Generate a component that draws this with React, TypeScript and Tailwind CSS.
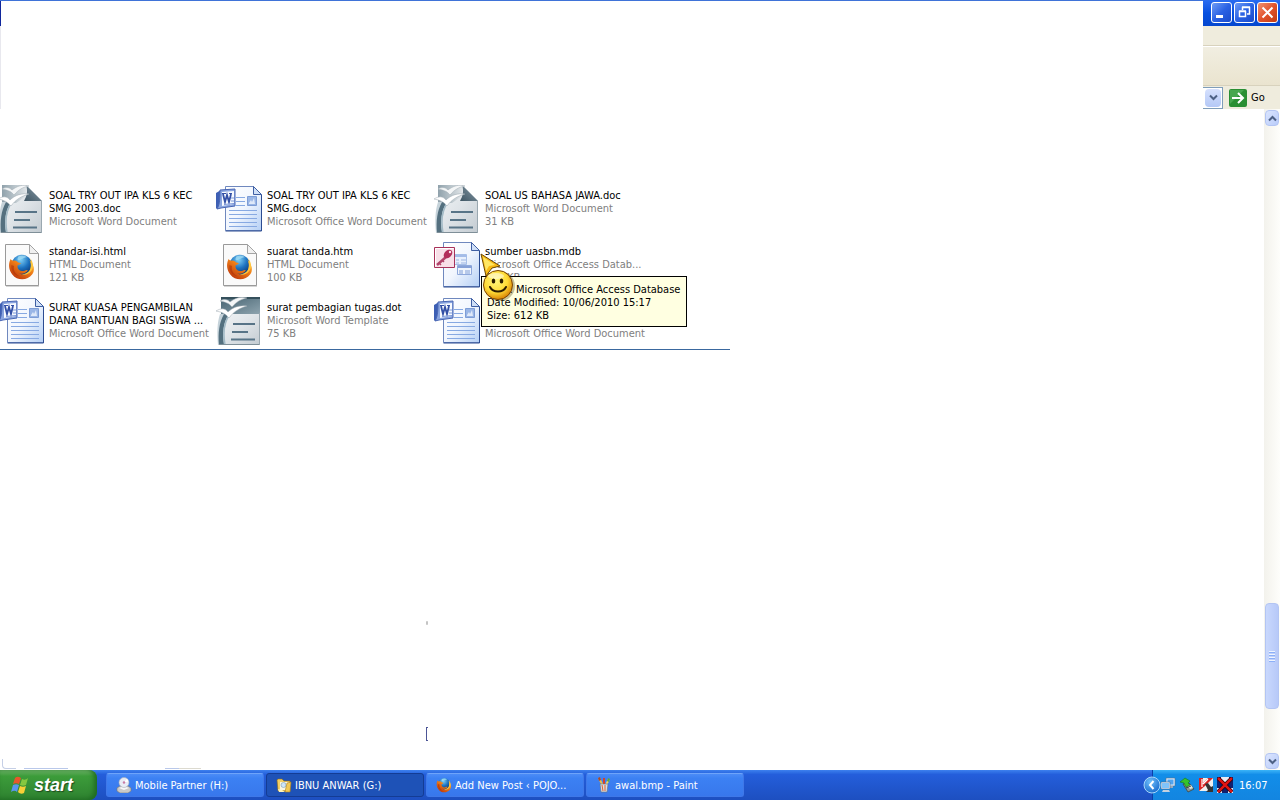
import { ReactNode } from "react";

type IconKind = "writer" | "writerTemplate" | "word" | "firefox" | "access";

interface FileEntry {
  id: string;
  icon: IconKind;
  name: string;
  lines: string[];
}

const FILES: FileEntry[] = [
  { id: "f1", icon: "writer", name: "SOAL TRY OUT IPA KLS 6 KEC SMG 2003.doc", lines: ["Microsoft Word Document"] },
  { id: "f2", icon: "word", name: "SOAL TRY OUT IPA KLS 6 KEC SMG.docx", lines: ["Microsoft Office Word Document"] },
  { id: "f3", icon: "writer", name: "SOAL US BAHASA JAWA.doc", lines: ["Microsoft Word Document", "31 KB"] },
  { id: "f4", icon: "firefox", name: "standar-isi.html", lines: ["HTML Document", "121 KB"] },
  { id: "f5", icon: "firefox", name: "suarat tanda.htm", lines: ["HTML Document", "100 KB"] },
  { id: "f6", icon: "access", name: "sumber uasbn.mdb", lines: ["Microsoft Office Access Datab...", "612 KB"] },
  { id: "f7", icon: "word", name: "SURAT KUASA PENGAMBILAN DANA BANTUAN BAGI SISWA ...", lines: ["Microsoft Office Word Document"] },
  { id: "f8", icon: "writerTemplate", name: "surat pembagian tugas.dot", lines: ["Microsoft Word Template", "75 KB"] },
  { id: "f9", icon: "word", name: "", lines: ["Microsoft Office Word Document"] },
];

function Gradients() {
  return (
    <svg className="absolute h-0 w-0" aria-hidden="true">
      <defs>
        <linearGradient id="paperBlue" x1="0" y1="0" x2="1" y2="1">
          <stop offset="0" stopColor="#ffffff" />
          <stop offset="0.5" stopColor="#f1f6fe" />
          <stop offset="1" stopColor="#b4cff5" />
        </linearGradient>
        <linearGradient id="paperGrey" x1="0" y1="0" x2="1" y2="1">
          <stop offset="0" stopColor="#f3f5f6" />
          <stop offset="0.5" stopColor="#dfe4e8" />
          <stop offset="1" stopColor="#c3cbd1" />
        </linearGradient>
        <linearGradient id="header" x1="0" y1="0" x2="1" y2="0">
          <stop offset="0" stopColor="#8fa1ab" />
          <stop offset="1" stopColor="#dfe4e7" />
        </linearGradient>
        <linearGradient id="slate" x1="0" y1="0" x2="1" y2="1">
          <stop offset="0" stopColor="#44616f" />
          <stop offset="1" stopColor="#8ea4af" />
        </linearGradient>
        <linearGradient id="fold" x1="0" y1="1" x2="1" y2="0">
          <stop offset="0" stopColor="#3e5563" />
          <stop offset="1" stopColor="#8c9fab" />
        </linearGradient>
        <radialGradient id="globe" cx="0.45" cy="0.25" r="0.8">
          <stop offset="0" stopColor="#7fd0f5" />
          <stop offset="0.5" stopColor="#1c72c0" />
          <stop offset="1" stopColor="#0a2b66" />
        </radialGradient>
        <linearGradient id="fox" x1="1" y1="0" x2="0.2" y2="1">
          <stop offset="0" stopColor="#ffd84a" />
          <stop offset="0.45" stopColor="#f07f18" />
          <stop offset="1" stopColor="#b9320a" />
        </linearGradient>
        <radialGradient id="face" cx="0.42" cy="0.35" r="0.68">
          <stop offset="0" stopColor="#fff67e" />
          <stop offset="0.6" stopColor="#ffda35" />
          <stop offset="1" stopColor="#d57c00" />
        </radialGradient>
        <radialGradient id="chevron" cx="0.4" cy="0.3" r="0.8">
          <stop offset="0" stopColor="#6fc0fb" />
          <stop offset="1" stopColor="#0f62c9" />
        </radialGradient>
      </defs>
    </svg>
  );
}

function FirefoxMark() {
  return (
    <>
      <circle cx="16" cy="14" r="12" fill="url(#globe)" />
      <path d="M12 4c4-2 8-1 10 1-3 0-4 2-7 2-1 2-4 2-4 0z" fill="#a8e0f5" opacity="0.7" />
      <path
        d="M3 7c1 1 2 2 3 2 2-1 4 0 6 2 2 0 3 1 3 1-1 2-4 2-4 3 0 4 3 6 6 6 3 0 4-2 6-1-2 4-8 5-11 3 4 3 9 3 12-1 4-4 3-9 1-14 5 5 7 12 3 17-5 7-17 8-23 0C1 20 0 13 3 7z"
        fill="url(#fox)"
      />
      <path d="M26 6c4 6 4 11 1 15-3 4-7 5-11 4 5-1 9-3 10-7 1-4 1-8 0-12z" fill="#ffc63c" />
      <path d="M4 14c-1 6 3 12 9 13-5-3-7-7-6-12z" fill="#a62a08" opacity="0.5" />
    </>
  );
}

function FileIcon({ kind }: { kind: IconKind }) {
  const svgProps = { viewBox: "0 0 48 48", className: "h-12 w-12 shrink-0", "aria-hidden": true };

  if (kind === "firefox") {
    return (
      <svg {...svgProps}>
        <path d="M8 4h24l9 9v33H8z" fill="#888" opacity="0.35" />
        <path d="M7.500 3.500h24l9 9v32h-33z" fill="#fafafa" stroke="#9a9a9a" />
        <path d="M31.500 3.500v9h9z" fill="#f0f0f0" stroke="#a4a4a4" />
        <g transform="translate(10 12) scale(0.86)">
          <FirefoxMark />
        </g>
      </svg>
    );
  }

  if (kind === "word" || kind === "access") {
    return (
      <svg {...svgProps}>
        <path d="M9.500 1.500h28l8 8v36h-36z" fill="url(#paperBlue)" stroke="#6f88be" />
        <path d="M45.500 10v36h-36" fill="none" stroke="#2c4c92" />
        <path d="M37.500 1.500v8h8z" fill="#cfdff7" stroke="#3f5fa3" />
        {kind === "word" ? (
          <>
            <path
              d="M20 12.500h9M20 16.500h9M20 20.500h9M13 25.500h28M13 29.500h28M13 33.500h28M13 37.500h28M13 41.500h28"
              stroke="#87a9e2"
            />
            <path d="M31.500 11.500h9v9h-9z" fill="#9ab6e6" stroke="#7d9dd6" />
            <path d="M33 18l2-3 1 2 2-4 1 6h-6z" fill="#dfe9f9" />
            <path d="M0 8l5-3v17l-4 2-1-1z" fill="#3d5fb4" />
            <path d="M4 5l15-1v17L5 23l-4 1c3-5 3-12 3-19z" fill="#8aa5df" stroke="#4866b4" />
            <path d="M6 7l12-1v13L6 21z" fill="#f7faff" />
            <path d="M7 9l2 8 2-7 2 7 2-8" fill="none" stroke="#3350a6" strokeWidth="1.800" />
            <path d="M6 8.500h4M13 8.500h3" stroke="#3350a6" />
            <path d="M15 13h3M15 16h3M8 19.500l10-1" stroke="#7b97d8" />
          </>
        ) : (
          <>
            <path d="M18.500 13.500h14v10h-14z" fill="#e8f0fd" stroke="#a7bfe8" />
            <path d="M19 14h14v2H19z" fill="#a4bce8" />
            <path d="M22 19h3M27 19h5M22 22h3M27 22h5" stroke="#9db5e2" />
            <path d="M23.500 24.500h14v9h-14z" fill="#f0f5fd" stroke="#8fa9dc" />
            <path d="M24 25h14v2H24z" fill="#86a1d8" />
            <path d="M25 30h4M31 30h5M25 32h4M31 32h5" stroke="#7f9dd6" />
            <path d="M.5 6.500h20v20H.5z" fill="#f8dfe8" stroke="#a8325a" />
            <path d="M1.500 25.500V7.500h18" fill="none" stroke="#fff" />
            <path d="M12 16l-9 8" stroke="#b1446b" strokeWidth="2.500" />
            <path d="M5 22l2 2M8 19l2 2" stroke="#b1446b" strokeWidth="1.500" />
            <ellipse cx="14" cy="13" rx="5" ry="3.500" transform="rotate(-45 14 13)" fill="#b32d5b" />
            <circle cx="16" cy="11" r="1.200" fill="#fbe4ec" />
          </>
        )}
      </svg>
    );
  }

  return (
    <svg {...svgProps}>
      {kind === "writerTemplate" ? (
        <>
          <path d="M5 16h39v32H3z" fill="url(#paperGrey)" />
          <path d="M5 0h39v17H5z" fill="url(#slate)" />
          <path d="M5 0h39v2H5z" fill="#35505c" />
        </>
      ) : (
        <>
          <path d="M4 0h24l16 16v32H4z" fill="url(#paperGrey)" />
          <path d="M4 0h24v11l-10 7H4z" fill="url(#header)" />
          <path d="M28 0l16 16H26c3-5 4-10 2-16z" fill="url(#fold)" />
        </>
      )}
      <path d="M4 17h9C8 25 7 37 9 48H2c-1-12-1-22 2-31z" fill="#c6d3da" />
      <path d="M8 17h5C7 25 6 37 8 48H3c-1-12 0-22 5-31z" fill="#54707f" />
      <path d="M14 17c-6 8-7 20-5 31" fill="none" stroke="#a2bac6" strokeWidth="1.500" />
      <path d="M3 47.500h41" stroke="#7f8f98" />
      <path d="M43.500 16v32" stroke="#9aa8b0" />
      <path
        d="M4 4c4-2 7-2 10 1 5-4 11-6 17-4-6 1-11 4-15 9-3-4-7-5-12-6z"
        fill="#f4f6f7"
        stroke="#9aa7af"
        strokeWidth="0.500"
      />
      <path
        d="M0 14c5-3 9-3 12 1 5-5 12-7 19-6-7 2-13 5-18 12-3-4-7-6-13-7z"
        fill="#ffffff"
        stroke="#9aa7af"
        strokeWidth="0.500"
      />
      <path d="M17 27h22M16 35h16M15 42.500h24" stroke="#587487" strokeWidth="2" />
    </svg>
  );
}

function SmileyCursor() {
  return (
    <svg viewBox="0 0 36 48" className="absolute top-3 left-[46px] z-20 h-12 w-9" aria-hidden="true">
      <circle cx="20" cy="33" r="15" fill="#5a4a10" opacity="0.35" />
      <path d="M1 1l19 12-8 2-6 8z" fill="#f7b915" stroke="#6b4700" />
      <path d="M3 4l12 8-6 1-3 5z" fill="#ffe763" />
      <circle cx="18" cy="32" r="14.500" fill="url(#face)" stroke="#7a4300" />
      <ellipse cx="16" cy="23" rx="8" ry="3" fill="#ffffff" opacity="0.5" />
      <ellipse cx="13.500" cy="28" rx="1.800" ry="2.500" fill="#2c1c00" />
      <ellipse cx="21.500" cy="28" rx="1.800" ry="2.500" fill="#2c1c00" />
      <path d="M10 34c3 6 13 6 16 0" fill="none" stroke="#2c1c00" strokeWidth="2" strokeLinecap="round" />
    </svg>
  );
}

function FileTooltip() {
  return (
    <div
      role="tooltip"
      className="absolute top-[35px] left-[47px] z-10 w-[206px] border border-black bg-[#ffffe1] px-[5px] pt-1.5 pb-1 whitespace-nowrap text-black"
    >
      <p>Type: Microsoft Office Access Database</p>
      <p>Date Modified: 10/06/2010 15:17</p>
      <p>Size: 612 KB</p>
    </div>
  );
}

function FileTile({ file }: { file: FileEntry }) {
  const hovered = file.icon === "access";

  return (
    <li className="relative flex h-12 items-center gap-[3px]">
      <FileIcon kind={file.icon} />
      <div className="w-40 pb-0.5">
        <p className={file.name ? "text-black" : "h-[26px]"}>{file.name}</p>
        {file.lines.map((line) => (
          <p key={line} className="whitespace-nowrap text-[#808080]">
            {line}
          </p>
        ))}
      </div>
      {hovered && <FileTooltip />}
      {hovered && <SmileyCursor />}
    </li>
  );
}

function CaptionButton({ label, danger, children }: { label: string; danger?: boolean; children: ReactNode }) {
  return (
    <button
      type="button"
      aria-label={label}
      className={`flex h-[21px] w-[21px] items-center justify-center rounded-[3px] border border-white bg-linear-to-br ${
        danger ? "from-[#f0916f] via-[#e2532b] to-[#c33c12]" : "from-[#6f9bf5] via-[#2b62e4] to-[#1a4bcb]"
      }`}
    >
      <svg viewBox="0 0 19 19" className="h-[19px] w-[19px]" fill="none" stroke="#fff" strokeWidth="2">
        {children}
      </svg>
    </button>
  );
}

function WindowHeader() {
  return (
    <header className="flex h-[109px] shrink-0">
      <div className="flex-1 border-t border-[#3f73d8]">
        <div className="h-[25px] w-px bg-[#10279c]" />
        <div className="h-[83px] w-px bg-[#e8e8ee]" />
      </div>
      <div className="flex w-[77px] flex-col">
        <div className="flex h-[26px] items-center justify-end gap-0.5 bg-linear-to-b from-[#2a6cf0] via-[#0650e0] to-[#0547cf] pr-0.5 pb-px">
          <CaptionButton label="Minimize">
            <path d="M4 13.500h7" strokeWidth="3" />
          </CaptionButton>
          <CaptionButton label="Restore">
            <path d="M7.500 7V4.500h7V11H12M7 4h8" strokeWidth="1.500" />
            <path d="M4.500 8.500h6v5h-6zM4 8h7" strokeWidth="1.500" />
          </CaptionButton>
          <CaptionButton label="Close" danger>
            <path d="M4.500 4.500l10 10M14.500 4.500l-10 10" />
          </CaptionButton>
        </div>
        <div className="h-5 border-b border-[#d8d2bd] bg-[#efecdd]" />
        <div className="h-10 border-t border-b border-t-white border-b-[#d8d2bd] bg-linear-to-b from-[#f1eee1] to-[#eae4cf]" />
        <div className="flex h-[23px] items-center gap-1.5 bg-[#efecdd]">
          <div className="flex h-[22px] w-5 items-center justify-end border border-l-0 border-[#7f9db9] bg-white pr-px">
            <button
              type="button"
              aria-label="Address list"
              className="flex h-[18px] w-4 items-center justify-center rounded-sm bg-linear-to-b from-[#d5e0fd] to-[#b4c8f6]"
            >
              <Chevron />
            </button>
          </div>
          <button type="button" className="flex items-center gap-1 text-black">
            <svg viewBox="0 0 18 18" className="h-[18px] w-[18px]">
              <rect width="18" height="18" rx="2" fill="#2a8f33" />
              <path d="M1 1h14L1 15z" fill="#5cb862" opacity="0.6" />
              <path d="M3 9h11M9 4l5 5-5 5" fill="none" stroke="#fff" strokeWidth="2" />
            </svg>
            Go
          </button>
        </div>
      </div>
    </header>
  );
}

function Chevron({ up }: { up?: boolean }) {
  return (
    <svg viewBox="0 0 9 7" className={`h-[7px] w-[9px] ${up ? "rotate-180" : ""}`} aria-hidden="true">
      <path d="M1 1.500L4.500 5L8 1.500" fill="none" stroke="#4d6185" strokeWidth="2" />
    </svg>
  );
}

function ScrollButton({ label, up }: { label: string; up?: boolean }) {
  return (
    <button
      type="button"
      aria-label={label}
      className="flex h-4 w-3.5 shrink-0 items-center justify-center rounded-sm border border-[#b3c5f3] bg-linear-to-br from-[#dbe5fe] to-[#b9ccfa]"
    >
      <Chevron up={up} />
    </button>
  );
}

function ScrollBar() {
  return (
    <div className="flex w-4 shrink-0 flex-col items-center bg-linear-to-r from-[#f3f2ec] to-[#fefefb] py-px">
      <ScrollButton label="Scroll up" up />
      <div className="grow-[477]" />
      <div className="flex h-[106px] w-3.5 flex-col items-center justify-center gap-px rounded-sm border border-[#b3c5f3] bg-linear-to-r from-[#c9d8fd] to-[#b7c9f8]">
        {[0, 1, 2, 3].map((grip) => (
          <div key={grip} className="h-0.5 w-1.5 border-t border-b border-t-[#eef4fe] border-b-[#8cb0f8]" />
        ))}
      </div>
      <div className="grow-[44]" />
      <ScrollButton label="Scroll down" />
    </div>
  );
}

function StartFlag() {
  return (
    <svg viewBox="0 0 20 20" className="h-5 w-5" aria-hidden="true">
      <path d="M5 3c2-2 4-1 6 0L9 9c-2-1-4-1-6 0z" fill="#e8562c" />
      <path d="M12 4c2 1 4 1 6-1l-2 7c-2 1-4 1-6 0z" fill="#85c840" />
      <path d="M3 10c2-1 4-1 6 0l-2 7c-2-2-4-1-6 0z" fill="#5a96ee" />
      <path d="M10 11c2 1 4 1 6 0l-2 7c-2 1-4 1-6-1z" fill="#f8cf37" />
    </svg>
  );
}

function DriveGlyph() {
  return (
    <svg viewBox="0 0 16 16" className="h-4 w-4 shrink-0" aria-hidden="true">
      <path d="M1 11l3-2h8l3 2v3l-3 2H4l-3-2z" fill="#c9c9c9" stroke="#777" strokeWidth="0.600" />
      <path d="M3 11l5 2 5-2-5-2z" fill="#f7f7f7" />
      <circle cx="8" cy="5.500" r="5" fill="#e8ecf5" stroke="#a8aebb" strokeWidth="0.600" />
      <path d="M8 5.500l3-4 1.500 3z" fill="#fff" />
      <circle cx="8" cy="5.500" r="1.200" fill="#c77ba5" />
    </svg>
  );
}

function FolderGlyph() {
  return (
    <svg viewBox="0 0 16 16" className="h-4 w-4 shrink-0" aria-hidden="true">
      <path d="M1 3l1-1h4l2 2h6v10H2z" fill="#f3cf62" stroke="#8d6a1a" strokeWidth="0.600" />
      <path d="M4 5h9v8H4z" fill="#fbf6de" />
      <circle cx="7.500" cy="8" r="2.500" fill="#cfe6f7" stroke="#8aa7bf" strokeWidth="0.700" />
      <path d="M11 6l4-1-1 10H9z" fill="#f2c853" stroke="#a57d22" strokeWidth="0.600" />
      <path d="M2 12l4 1 3 2H3z" fill="#fff3b8" />
    </svg>
  );
}

function FirefoxGlyph() {
  return (
    <svg viewBox="0 0 32 32" className="h-4 w-4 shrink-0" aria-hidden="true">
      <FirefoxMark />
    </svg>
  );
}

function PaintGlyph() {
  return (
    <svg viewBox="0 0 16 16" className="h-4 w-4 shrink-0" aria-hidden="true">
      <path d="M3 1l4 8" stroke="#e8c14c" strokeWidth="2" />
      <path d="M8 1v8" stroke="#d8402c" strokeWidth="2" />
      <path d="M13 2l-4 8" stroke="#f3d467" strokeWidth="2" />
      <path d="M2 1l2-1 1 3-2 1z" fill="#a9472b" />
      <path d="M12 1l2 1-1 3-2-1z" fill="#56a544" />
      <path d="M4 7h8l-1 8H5z" fill="#d6dde3" stroke="#68717b" strokeWidth="0.600" />
      <path d="M6 8l1 6M9 8v6" stroke="#e0632f" strokeWidth="1" />
    </svg>
  );
}

const TASKS = [
  { label: "Mobile Partner (H:)", icon: <DriveGlyph />, active: false },
  { label: "IBNU ANWAR (G:)", icon: <FolderGlyph />, active: true },
  { label: "Add New Post ‹ POJO...", icon: <FirefoxGlyph />, active: false },
  { label: "awal.bmp - Paint", icon: <PaintGlyph />, active: false },
];

function Tray() {
  return (
    <div className="relative flex w-32 items-center border-l border-[#0b3fa8] bg-linear-to-b from-[#3ab4f7] via-[#128ee9] via-15% to-[#1385e0] pl-[7px] text-white">
      <button type="button" aria-label="Show hidden icons" className="absolute top-1.5 -left-2.5 h-[18px] w-[18px]">
        <svg viewBox="0 0 18 18" className="h-[18px] w-[18px]">
          <circle cx="9" cy="9" r="8" fill="url(#chevron)" stroke="#a7d6fb" />
          <path d="M10.500 5L7 9l3.500 4" fill="none" stroke="#fff" strokeWidth="2" />
        </svg>
      </button>
      <div className="flex items-center gap-[3px]">
        <svg viewBox="0 0 16 16" className="h-4 w-4" aria-hidden="true">
          <path d="M6 1h9v8H6z" fill="#dce9f8" stroke="#53718f" strokeWidth="0.600" />
          <path d="M7.500 2.500h6v5h-6z" fill="#4fa4f0" />
          <path d="M9 9h4v2H9z" fill="#93a8bd" />
          <path d="M1 5h9v7H1z" fill="#dce9f8" stroke="#53718f" strokeWidth="0.600" />
          <path d="M2 6h7v5H2z" fill="#7fc3fa" />
          <path d="M3 13h6l1 2H2z" fill="#c3d1df" />
        </svg>
        <svg viewBox="0 0 16 16" className="h-4 w-4" aria-hidden="true">
          <path d="M4 7l6-1 5 6-6 3z" fill="#8e9790" stroke="#3c4540" strokeWidth="0.800" />
          <path d="M9 9l3-1 2 3-3 1z" fill="#dfe4df" />
          <path d="M7 11l5-2" stroke="#3c4540" />
          <path d="M1 5l5-4 5 3-2 2 2 2-4 2-2-4z" fill="#35c32b" stroke="#14771a" strokeWidth="0.600" />
        </svg>
        <svg viewBox="0 0 16 16" className="h-4 w-4" aria-hidden="true">
          <path d="M1 1h14v13H1z" fill="#efefef" />
          <path d="M1 1h4v5l5-5h5L7 9l-6 5z" fill="#d92525" />
          <path d="M4 2v8M5 7l5-5" stroke="#fff" strokeWidth="1.200" />
          <path d="M7 7l3-1 3 4 2-1v6H8l2-2z" fill="#333" />
        </svg>
        <svg viewBox="0 0 16 16" className="h-4 w-4" aria-hidden="true">
          <path d="M0 0h16v16H0z" fill="#10206e" />
          <path d="M4 0h8v6H4zM0 11h5v5H0zM11 11h5v5h-5z" fill="#e8eaf5" />
          <path d="M1 1l14 14M15 1L1 15" stroke="#200000" strokeWidth="4" />
          <path d="M1 1l14 14M15 1L1 15" stroke="#e01414" strokeWidth="2.500" />
        </svg>
      </div>
      <time className="ml-1.5">16:07</time>
    </div>
  );
}

function TaskBar() {
  return (
    <footer className="flex h-[30px] shrink-0 bg-linear-to-b from-[#3d80ee] via-[#245edb] via-15% to-[#1d4fc0]">
      <button
        type="button"
        className="flex w-[97px] items-center gap-1 rounded-r-lg bg-linear-to-b from-[#6db468] via-[#3c9c3a] via-20% to-[#2e8230] pl-2.5 font-['Liberation_Sans',sans-serif] text-[18px] leading-5 font-bold text-white italic shadow-[inset_-3px_-1px_5px_#1f6b22] text-shadow-[1px_1px_1px_#1d4a1d]"
      >
        <StartFlag />
        start
      </button>
      <nav className="flex min-w-0 flex-1 items-center gap-0.5 pl-[9px]">
        {TASKS.map((task) => (
          <button
            key={task.label}
            type="button"
            className={`flex h-6 w-[158px] items-center gap-[3px] rounded-[3px] border pl-[9px] whitespace-nowrap text-white ${
              task.active
                ? "border-[#143c94] bg-[#1e52b7]"
                : "border-[#3f78e8] border-t-[#6ea4fa] bg-linear-to-b from-[#4b8cf7] via-[#3c81f3] via-20% to-[#3877ec]"
            }`}
          >
            {task.icon}
            {task.label}
          </button>
        ))}
      </nav>
      <Tray />
    </footer>
  );
}

export default function App() {
  return (
    <div className="flex h-screen flex-col overflow-hidden bg-white font-['DejaVu_Sans_Condensed','DejaVu_Sans',sans-serif] text-[11px] leading-[13px]">
      <Gradients />
      <WindowHeader />
      <main className="flex min-h-0 flex-1">
        <section className="flex min-w-0 flex-1 flex-col overflow-hidden">
          <ul className="-ml-0.5 grid w-[732px] grid-cols-[218px_218px_218px] gap-y-2 border-b border-[#3a689f] pt-[76px] pb-1">
            {FILES.map((file) => (
              <FileTile key={file.id} file={file} />
            ))}
          </ul>
          <div className="mt-[271px] ml-[426px] h-1 w-0.5 rounded-full bg-[#c4c4c4]" />
          <div className="mt-[102px] ml-[426px] h-3.5 w-0.5 border border-r-0 border-[#4c5596]" />
          <div className="mt-auto flex pb-px">
            <div className="ml-0.5 h-2.5 w-3.5 rounded-bl-sm border-b border-l border-[#c5cfe6]" />
            <div className="ml-2 w-11 border-b border-[#b9c8ea]" />
            <div className="ml-[97px] w-3.5 border-b border-[#b9c8ea]" />
            <div className="w-[22px] border-b border-[#dcdad0]" />
          </div>
        </section>
        <ScrollBar />
      </main>
      <TaskBar />
    </div>
  );
}
